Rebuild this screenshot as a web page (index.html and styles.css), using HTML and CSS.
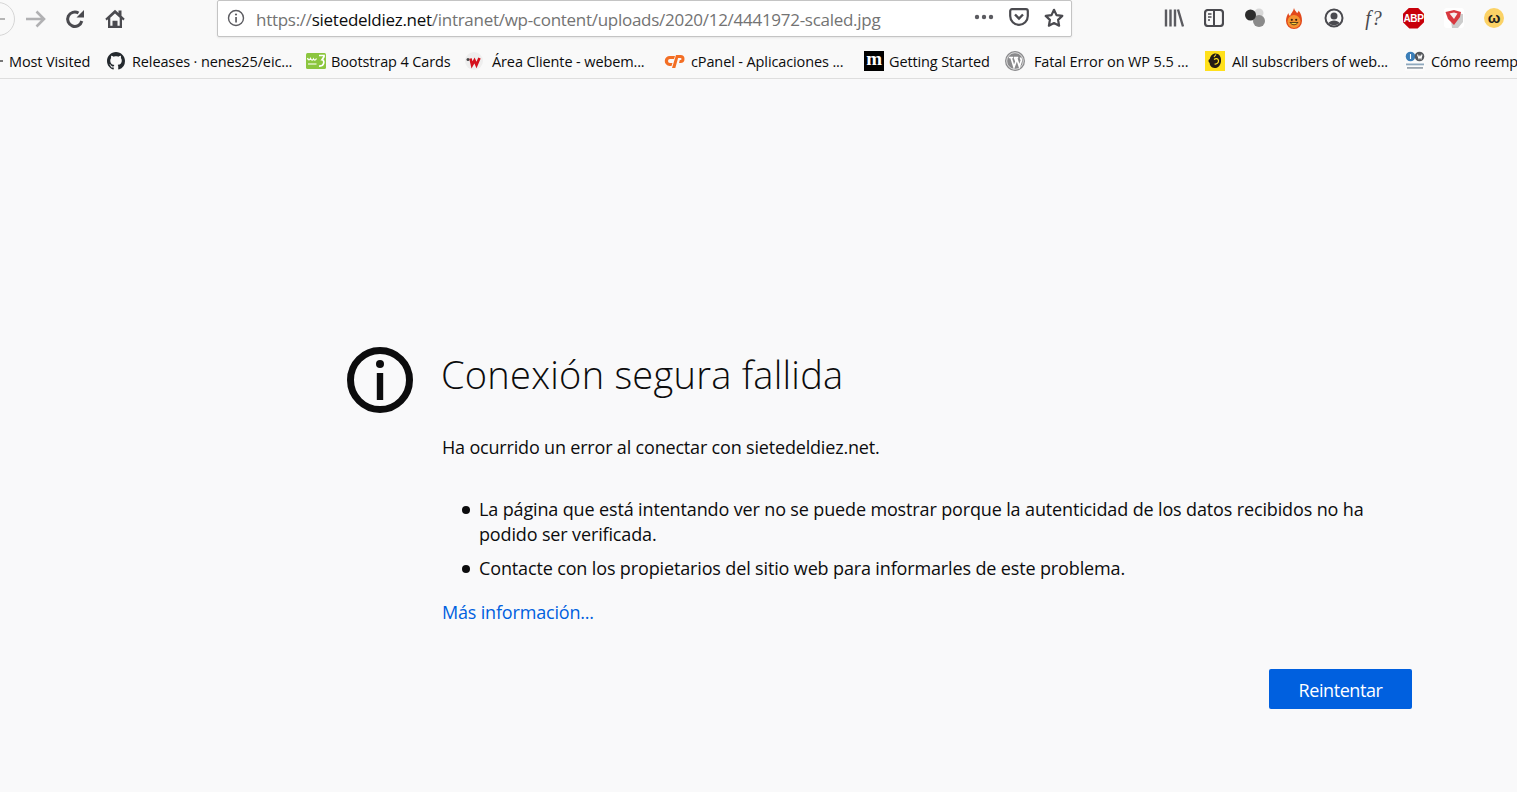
FILE: index.html
```html
<!DOCTYPE html>
<html lang="es">
<head>
<meta charset="utf-8">
<title>Conexión segura fallida</title>
<link rel="stylesheet" href="styles.css">
</head>
<body>
<header class="chrome">
  <div class="toolbar">
    <div class="nav">
      <span class="back"><svg width="12" height="12" viewBox="0 0 12 12"><path d="M2 6h10" stroke="#b5b5b5" stroke-width="2" fill="none"/></svg></span>
      <svg class="forward" width="22" height="20" viewBox="0 0 22 20"><path d="M1 10h18M11.500 2.500 19 10l-7.500 7.500" stroke="#b1b1b3" stroke-width="2.600" fill="none"/></svg>
      <svg class="reload" width="20" height="20" viewBox="0 0 20 20"><path d="M16.800 12A7.200 7.200 0 1 1 13.500 4" stroke="#4a4a4f" stroke-width="3" fill="none"/><path d="M11.500 8.500h7.500V1z" fill="#4a4a4f"/></svg>
      <svg class="home" width="20" height="20" viewBox="0 0 20 20"><path d="M10 .800.300 9.800 1.700 11.400 3 10.200V19h14v-8.800l1.300 1.200 1.400-1.600-3.200-3V1.500h-3v2.600z" fill="#4a4a4f"/><path d="M10 4.500 5.300 8.800v7.900H7.500v-5h5v5h2.200V8.800z" fill="#f9f9f9"/><rect x="8.800" y="13" width="2.400" height="4" fill="#4a4a4f"/></svg>
    </div>
    <div class="urlbar">
      <svg class="info" width="18" height="18" viewBox="0 0 18 18"><circle cx="9" cy="9" r="7.500" stroke="#5b5b60" stroke-width="1.400" fill="none"/><rect x="8.200" y="8" width="1.700" height="5.500" fill="#5b5b60"/><circle cx="9" cy="5.500" r="1.100" fill="#5b5b60"/></svg>
      <span class="url"><span class="dim">https://</span>sietedeldiez.net<span class="dim">/intranet/wp-content/uploads/2020/12/4441972-scaled.jpg</span></span>
      <span class="url-actions">
        <svg width="20" height="6" viewBox="0 0 20 6"><circle cx="3" cy="3" r="2.200" fill="#5b5b60"/><circle cx="10" cy="3" r="2.200" fill="#5b5b60"/><circle cx="17" cy="3" r="2.200" fill="#5b5b60"/></svg>
        <svg width="20" height="18" viewBox="0 0 20 18"><path d="M3 1.200h14a1.800 1.800 0 0 1 1.800 1.800v5a8.800 8.800 0 0 1-17.600 0V3A1.800 1.800 0 0 1 3 1.200z" stroke="#4a4a4f" stroke-width="2.200" fill="none"/><path d="M6 6.500l4 4 4-4" stroke="#4a4a4f" stroke-width="2.400" fill="none"/></svg>
        <svg width="20" height="19" viewBox="0 0 20 19"><path d="M10 1.800l2.500 5.300 5.800.8-4.200 4 1 5.800L10 15.100l-5.100 2.600 1-5.800-4.200-4 5.800-.8z" stroke="#4a4a4f" stroke-width="2.200" stroke-linejoin="round" fill="none"/></svg>
      </span>
    </div>
    <div class="tools">
      <svg width="20" height="18" viewBox="0 0 20 18"><path d="M2 .500v17M6.500 .500v17M11 .500v17M14 .500l5 17" stroke="#5b5b60" stroke-width="2.400" fill="none"/></svg>
      <svg width="20" height="18" viewBox="0 0 20 18"><rect x="1" y="1" width="18" height="16" rx="3" stroke="#4a4a4f" stroke-width="2.200" fill="none"/><path d="M10 1v16" stroke="#4a4a4f" stroke-width="2"/><path d="M4 5h3.500M4 8h3.500M4 11h2" stroke="#4a4a4f" stroke-width="1.400"/></svg>
      <svg width="22" height="20" viewBox="0 0 22 20"><circle cx="15" cy="5" r="4.500" fill="#d8d8d8"/><circle cx="15" cy="13" r="6" fill="#8a8a8a"/><circle cx="6.500" cy="7" r="5.500" fill="#2d2d2d"/></svg>
      <svg width="20" height="21" viewBox="0 0 20 21"><path d="M10 0c.5 2.500 2 3 3 5 1-.5 1.500-1.500 1.500-2.500C17 5 18 9 18 13a8 8 0 0 1-16 0c0-3.500 1-5.500 2.500-8 0 1.500.5 2 1.500 3C7 5.500 9.500 3 10 0z" fill="#e2491c"/><circle cx="10" cy="13.500" r="6.500" fill="#f59331"/><circle cx="7.800" cy="11.800" r="1.100" fill="#3a2410"/><circle cx="12.200" cy="11.800" r="1.100" fill="#3a2410"/><path d="M6 14.500c2 3 6 3 8 0z" fill="#ffd23a" stroke="#3a2410" stroke-width=".8"/></svg>
      <svg width="20" height="20" viewBox="0 0 20 20"><circle cx="10" cy="10" r="8.500" stroke="#4a4a4f" stroke-width="2" fill="none"/><circle cx="10" cy="8" r="3.500" fill="#4a4a4f"/><path d="M4.500 15c2-3.500 9-3.500 11 0-3 3-8 3-11 0z" fill="#4a4a4f"/></svg>
      <span class="font-finder">f?</span>
      <span class="abp">ABP</span>
      <svg width="20" height="20" viewBox="0 0 20 20"><rect width="20" height="20" rx="3" fill="#ffffff"/><path d="M6 5l13 1v8l-5 6H8z" fill="#cccccc"/><path d="M1.500 4 10 2l7 2-1 5-6 8-6-6z" fill="#d8383f"/><path d="M5.500 5.500 10 4.500l3.500 1-3.500 5.500z" fill="#f6eeee"/></svg>
      <span class="wapp">ω</span>
    </div>
  </div>
  <nav class="bookmarks">
    <a class="bm bm-first"><svg width="4" height="12" viewBox="0 0 4 12"><path d="M0 5h3v2H0z" fill="#777"/></svg><span>Most Visited</span></a>
    <a class="bm gap-7"><svg width="18" height="18" viewBox="0 0 16 16"><path fill="#24292e" d="M8 0C3.580 0 0 3.580 0 8c0 3.540 2.290 6.530 5.470 7.590.4.070.55-.17.55-.38 0-.19-.01-.82-.01-1.490-2.010.37-2.530-.49-2.690-.94-.09-.23-.48-.94-.82-1.130-.28-.15-.68-.52-.01-.53.630-.01 1.080.58 1.230.82.720 1.210 1.870.87 2.330.66.070-.52.280-.87.510-1.070-1.780-.2-3.640-.89-3.640-3.950 0-.87.310-1.590.820-2.150-.08-.2-.36-1.020.08-2.120 0 0 .67-.21 2.200.82.640-.18 1.320-.27 2-.27s1.360.09 2 .27c1.530-1.040 2.200-.82 2.200-.82.440 1.100.16 1.920.08 2.120.51.56.82 1.270.82 2.150 0 3.070-1.870 3.750-3.650 3.950.29.250.54.730.54 1.480 0 1.070-.01 1.930-.01 2.200 0 .21.150.46.550.38A8.010 8.010 0 0 0 16 8c0-4.420-3.580-8-8-8z"/></svg><span>Releases · nenes25/eic...</span></a>
    <a class="bm gap-5"><svg width="20" height="16" viewBox="0 0 20 16"><rect width="20" height="16" rx="1.500" fill="#8cc63f"/><path d="M1.500 5c.8 2.500 2 2.500 3 .5 1 2 2.200 2 3 .5.800 1.500 2 1.500 3-.5" stroke="#fff" stroke-width="1.300" fill="none"/><path d="M2 11h8.500" stroke="#dff0c4" stroke-width="1.500"/><path d="M13 2.500h5v1.200l-2 3c2.800.2 2.800 6.800-3 6.300" stroke="#fff" stroke-width="1.700" fill="none"/></svg><span>Bootstrap 4 Cards</span></a>
    <a class="bm gap-9"><svg width="18" height="18" viewBox="0 0 18 18"><circle cx="9" cy="9" r="9" fill="#eeeeee"/><path d="M5.500 6.500 7 13l2.500-4.500L11.500 13l3-7" stroke="#d4101c" stroke-width="2.600" fill="none"/><circle cx="3" cy="7.500" r="1.500" fill="#444"/></svg><span>Área Cliente - webem...</span></a>
    <a class="bm cpanel"><svg width="21" height="14" viewBox="0 0 21 14"><path d="M6 2h5l-1 3H6a2 2 0 0 0 0 4h2.500L7.500 12H5.500A5 5 0 0 1 6 2z" fill="#f36e24"/><path d="M12 1h4.500a4 4 0 0 1 0 8H15l.8-3h.700a1 1 0 0 0 0-2h-2.400L11.300 14H8z" fill="#f36e24"/></svg><span>cPanel - Aplicaciones ...</span></a>
    <a class="bm gap-5"><span class="medium">m</span><span>Getting Started</span></a>
    <a class="bm gap-9"><svg width="20" height="20" viewBox="0 0 20 20"><circle cx="10" cy="10" r="10" fill="#8a8a8c"/><circle cx="10" cy="10" r="8.300" fill="none" stroke="#f1f1f1" stroke-width=".8"/><path d="M3.800 6.500h4.400M6 6.500l3 9.500 2-5.500-1.500-4M9 6.500h4.200M11.400 6.500l3 9 1.800-5.500c.4-1.500-.4-2.500-.7-3.500" stroke="#fff" stroke-width="1.700" fill="none"/></svg><span>Fatal Error on WP 5.5 ...</span></a>
    <a class="bm gap-7"><svg width="20" height="20" viewBox="0 0 20 20"><rect width="20" height="20" fill="#ffe01b"/><path d="M9.500 2.500c4.500-.5 7 3 6.500 8-.4 4-3.500 7-6.500 6.500-3-.4-5-2.500-4.800-5C3 11 3 8.500 4.800 8 5 5.500 7 3 9.500 2.500z" fill="#241c15"/><path d="M9 8.500c2-1.500 4-1 4.500 1 .3 2-1.500 4-4 3.500M11 3.500 9 6" stroke="#ffe01b" stroke-width="1.200" fill="none"/></svg><span>All subscribers of web...</span></a>
    <a class="bm"><svg width="20" height="20" viewBox="0 0 20 20"><rect width="20" height="20" fill="#fbfbfb"/><circle cx="5.500" cy="5.500" r="4.800" fill="#3b7eb8"/><circle cx="14.500" cy="5.500" r="4.800" fill="#55585c"/><path d="M5.500 3v5M12.500 3.500l1.500 4 1-2.500 1 2.500 1-4" stroke="#fff" stroke-width="1.100" fill="none"/><rect x="1" y="12.500" width="18" height="1.800" fill="#8ea8bd"/><rect x="2" y="16" width="16" height="1.800" fill="#9aa4ad"/></svg><span>Cómo reemp</span></a>
  </nav>
</header>
<main class="page">
  <div class="error">
    <svg class="error-icon" width="66" height="66" viewBox="0 0 66 66"><circle cx="33" cy="33" r="29.500" stroke="#0c0c0d" stroke-width="7" fill="none"/><circle cx="33" cy="17" r="4" fill="#0c0c0d"/><rect x="29.800" y="26" width="6.400" height="27" fill="#0c0c0d"/></svg>
    <div class="error-body">
      <h1>Conexión segura fallida</h1>
      <p class="lead">Ha ocurrido un error al conectar con sietedeldiez.net.</p>
      <ul>
        <li>La página que está intentando ver no se puede mostrar porque la autenticidad de los datos recibidos no ha podido ser verificada.</li>
        <li>Contacte con los propietarios del sitio web para informarles de este problema.</li>
      </ul>
      <a class="more">Más información...</a>
      <div class="actions"><button class="retry">Reintentar</button></div>
    </div>
  </div>
</main>
</body>
</html>
```
FILE: styles.css
```css
* { box-sizing: border-box; }
html, body { margin: 0; height: 100%; }
body {
  width: 1517px;
  height: 792px;
  overflow: hidden;
  background: #f9f9fa;
  color: #0c0c0d;
  font-family: "Open Sans", "Noto Sans", sans-serif;
  display: flex;
  flex-direction: column;
}
.chrome {
  height: 79px;
  flex: none;
  background: #f9f9f9;
  border-bottom: 1px solid #dedede;
  overflow: hidden;
}
.toolbar {
  height: 39px;
  display: flex;
  align-items: center;
}
.nav {
  display: flex;
  align-items: center;
  width: 217px;
  flex: none;
  height: 37px;
  margin-top: -1px;
}
.back {
  width: 34px;
  height: 34px;
  flex: none;
  margin-left: -19px;
  border: 1px solid #d6d6d6;
  border-radius: 50%;
  display: flex;
  align-items: center;
  justify-content: flex-end;
  padding-right: 9px;
}
.forward { margin-left: 10px; flex: none; }
.reload { margin-left: 18px; margin-top: -1px; flex: none; }
.home { margin-left: 20px; margin-top: -1px; flex: none; }
.urlbar {
  width: 855px;
  height: 37px;
  margin-top: -2px;
  flex: none;
  background: #fff;
  border: 1px solid #c4c4c4;
  border-radius: 2px;
  box-shadow: 0 1px 2px rgba(0,0,0,.08);
  display: flex;
  align-items: center;
  padding: 0 7px 0 9px;
}
.info { flex: none; margin-top: -2px; }
.url {
  margin-left: 11px;
  padding-top: 2px;
  font-size: 17px;
  letter-spacing: -.28px;
  color: #0c0c0d;
  white-space: nowrap;
  flex: 1;
}
.dim { color: #737373; }
.url-actions {
  display: flex;
  align-items: center;
  gap: 15px;
  margin: -3px 0 0 0;
}
.tools {
  display: flex;
  align-items: center;
  gap: 20px;
  margin-left: 92px;
  margin-top: -3px;
  flex: none;
}
.tools > svg:nth-child(3) { margin-right: -2px; }
.font-finder {
  width: 20px;
  font: italic 20px/20px "Liberation Serif", serif;
  letter-spacing: 1px;
  color: #4a4a4f;
  text-align: center;
}
.abp {
  width: 21px;
  height: 21px;
  margin-left: -1px;
  background: #c8000a;
  clip-path: polygon(30% 0, 70% 0, 100% 30%, 100% 70%, 70% 100%, 30% 100%, 0 70%, 0 30%);
  color: #fff;
  font: 700 10px/21px "Liberation Sans", sans-serif;
  letter-spacing: -.3px;
  text-align: center;
}
.wapp {
  width: 20px;
  height: 20px;
  border-radius: 50%;
  background: #fbd266;
  color: #1f1f1f;
  font: 700 15px/19px "Liberation Sans", sans-serif;
  text-align: center;
}
.bookmarks {
  height: 39px;
  display: grid;
  grid-template-columns: 107px 199px 159px 199px 200px 141px 200px 200px 112px;
  align-items: center;
  padding-top: 5px;
}
.bm {
  display: flex;
  align-items: center;
  gap: 6px;
  font-size: 14.500px;
  letter-spacing: -.12px;
  color: #0c0c0d;
  white-space: nowrap;
  min-width: 0;
}
.bm svg { flex: none; }
.bm-first { gap: 5px; }
.gap-5 { gap: 5px; }
.gap-7 { gap: 7px; }
.gap-9 { gap: 9px; }
.medium {
  width: 20px;
  height: 20px;
  flex: none;
  background: #000;
  color: #fff;
  font: 700 19px/16px "Liberation Serif", serif;
  text-align: center;
}
.page { flex: 1; min-height: 0; }
.error {
  display: flex;
  align-items: flex-start;
  margin: 268px 105px 0 347px;
  gap: 29px;
}
.error-icon { flex: none; }
.error-body { flex: 1; min-width: 0; }
h1 {
  margin: -1px 0 0 -1px;
  font-size: 38px;
  font-weight: 300;
  line-height: 57px;
  letter-spacing: .24px;
  color: #0c0c0d;
}
.lead, ul, .more {
  font-size: 18px;
  line-height: 25px;
}
.lead, .more { letter-spacing: -.18px; }
ul { letter-spacing: -.14px; }
.lead { margin: 32px 0 0; }
ul {
  list-style: none;
  margin: 37px 0 0;
  padding: 0 0 0 37px;
}
li { margin-bottom: 9px; }
li::before {
  content: "";
  display: inline-block;
  width: 8px;
  height: 8px;
  margin: 0 9px 2px -17px;
  border-radius: 50%;
  background: #0c0c0d;
}
.more {
  display: block;
  margin-top: 19px;
  color: #0060df;
}
.actions {
  display: flex;
  justify-content: flex-end;
  margin-top: 44px;
}
.retry {
  width: 143px;
  height: 40px;
  border: 0;
  border-radius: 2px;
  background: #0060df;
  color: #fff;
  font-family: inherit;
  font-size: 18px;
  letter-spacing: -.42px;
  padding: 2px 0 0;
}
```
